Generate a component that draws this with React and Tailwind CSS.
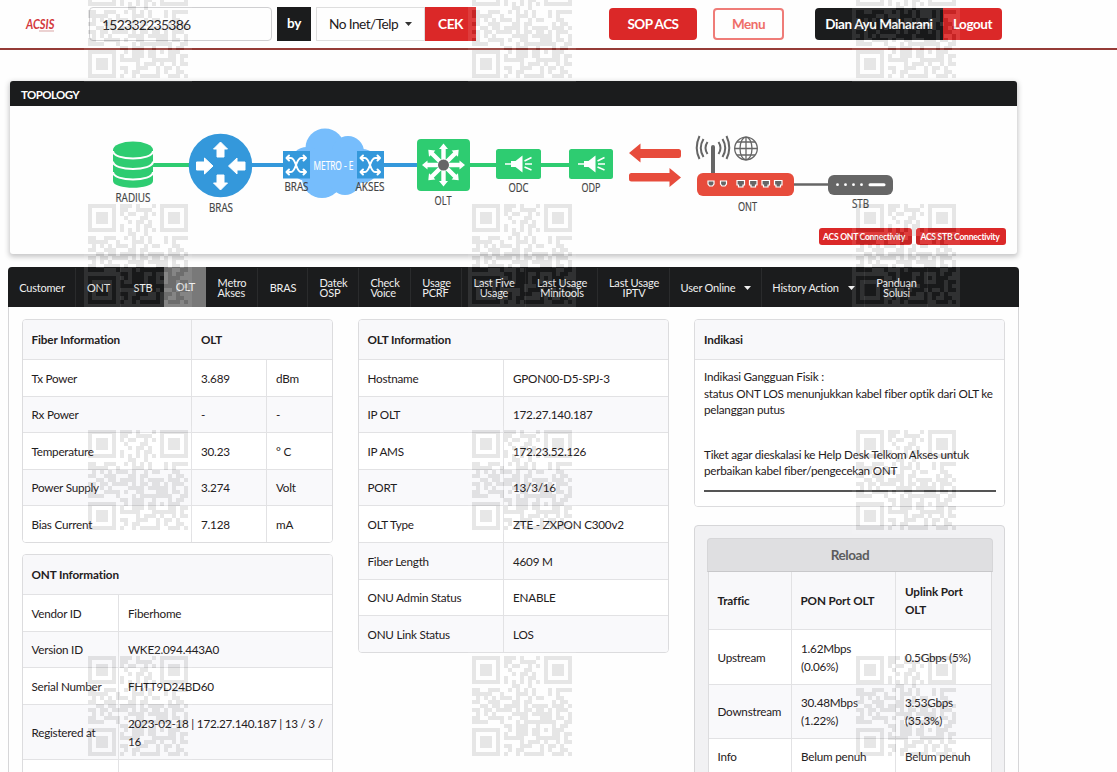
import React from "react";

const QR = [
  "1111111011101000101111111",
  "1000001011001111001000001",
  "1011101010110010101011101",
  "1011101001000110001011101",
  "1011101000101101001011101",
  "1000001010001011001000001",
  "1111111010101010101111111",
  "0000000000110010000000000",
  "1100111001010101000101111",
  "1111100100011101000101000",
  "0101010111010010110001100",
  "1100111000110110000010110",
  "0011011011110101111011101",
  "1101101111010110110101110",
  "0101010000111101111101001",
  "1100111101001100011101101",
  "1111000100010111111110011",
  "0000000011011100100010110",
  "1111111001011101101011100",
  "1000001010011101100011011",
  "1011101011111000111111010",
  "1011101000001011101001011",
  "1011101011001110010110100",
  "1000001001011000010100110",
  "1111111010010111110011101",
];

const qrPath = QR.flatMap((row, y) =>
  [...row].map((c, x) => (c === "1" ? `M${x + 1} ${y + 1}h1v1h-1z` : ""))
).join("");

function Watermark({ className }) {
  return (
    <svg className={`absolute h-[108px] w-[108px] opacity-[0.09] ${className}`} viewBox="0 0 27 27" shapeRendering="crispEdges">
      <rect width="27" height="27" fill="#fff" />
      <path d={qrPath} fill="#000" />
    </svg>
  );
}

function Watermarks() {
  return (
    <div className="pointer-events-none absolute inset-0 overflow-hidden">
      <Watermark className="left-[84px] top-[-26px]" />
      <Watermark className="left-[468px] top-[-26px]" />
      <Watermark className="left-[852px] top-[-26px]" />
      <Watermark className="left-[84px] top-[200px]" />
      <Watermark className="left-[468px] top-[200px]" />
      <Watermark className="left-[852px] top-[200px]" />
      <Watermark className="left-[84px] top-[426px]" />
      <Watermark className="left-[468px] top-[426px]" />
      <Watermark className="left-[852px] top-[426px]" />
      <Watermark className="left-[84px] top-[652px]" />
      <Watermark className="left-[468px] top-[652px]" />
      <Watermark className="left-[852px] top-[652px]" />
    </div>
  );
}

function Caret({ className = "" }) {
  return (
    <svg className={`h-1 w-[7px] shrink-0 ${className}`} viewBox="0 0 7 4">
      <path d="M0 0h7L3.5 4z" fill="currentColor" />
    </svg>
  );
}

function Header() {
  return (
    <header className="flex h-[50px] items-start border-b-2 border-[#953b36] pt-[7px]">
      <svg className="ml-5 mt-[5px] h-[26px] w-[42px] shrink-0" viewBox="0 0 42 26">
        <text x="6" y="17" fontSize="13" fontWeight="700" fontStyle="italic" fill="#d3393c" textLength="28.5" lengthAdjust="spacingAndGlyphs">ACSIS</text>
        <path d="M19 19h15" stroke="#d9a5a5" strokeWidth="1" />
      </svg>
      <div className="ml-[27px] flex h-[34px] w-[183px] items-center rounded-[4px] border border-[#cfcfd1] px-3 text-[14px] tracking-[-0.75px]">152332235386</div>
      <div className="ml-[5px] flex h-[34px] w-[34px] items-center justify-center bg-[#1b1c1d] pb-px text-[13.5px] font-bold tracking-[-0.2px] text-white">by</div>
      <div className="ml-[5px] flex h-[34px] w-[109px] items-center border border-[#dedede] pl-[12px] text-[13.7px] tracking-[-0.55px]">
        <span className="w-[69px] whitespace-nowrap">No Inet/Telp</span>
        <Caret className="ml-[7px] text-[#333]" />
      </div>
      <div className="flex h-[34px] w-[51px] items-center justify-center bg-[#db2828] text-[13.7px] font-bold tracking-[-0.5px] text-white">CEK</div>
      <div className="ml-[133px] mt-px flex h-8 w-[88px] items-center justify-center rounded-[4px] bg-[#db2828] text-[13.5px] font-bold tracking-[-0.5px] text-white">SOP ACS</div>
      <div className="ml-4 mt-px flex h-8 w-[71px] items-center justify-center rounded-[4px] border-2 border-[#ef7c78] text-[13.5px] font-bold tracking-[-0.45px] text-[#ef6d68]">Menu</div>
      <div className="ml-[31px] mt-px flex h-8 w-[128px] items-center justify-center whitespace-nowrap rounded-l-[4px] bg-[#1b1c1d] text-[13.5px] font-bold tracking-[-0.42px] text-white">Dian Ayu Maharani</div>
      <div className="mt-px flex h-8 w-[59px] items-center justify-center rounded-r-[4px] bg-[#db2828] text-[13.5px] font-bold tracking-[-0.42px] text-white">Logout</div>
    </header>
  );
}

function Label({ x, y, w, fill = "#444", children }) {
  return (
    <text x={x} y={y} fontSize="12" fill={fill} stroke={fill} strokeWidth="0.2" textAnchor="middle" textLength={w} lengthAdjust="spacingAndGlyphs" fontFamily="'Open Sans', sans-serif">
      {children}
    </text>
  );
}

const BLOCK_ARROW = "M0 -8.5L8 0L4 0L4 8L-4 8L-4 0L-8 0Z";
const THIN_ARROW = "M0 -8L7 -1L3.500 -1L3.500 7L-3.500 7L-3.500 -1L-7 -1Z";

function Shuffle({ x, y }) {
  return (
    <g transform={`translate(${x} ${y})`}>
      <rect width="27" height="27.5" fill="#3498db" />
      <g fill="none" stroke="#fff" strokeWidth="2" strokeLinecap="round" strokeLinejoin="round">
        <path d="M4.500 7h3.500c5 0 5 14 10 14h4M4.500 21h3.500c5 0 5-14 10-14h4" />
        <path d="M6 4.500L3.500 7L6 9.500M6 18.500L3.500 21L6 23.500M20.500 4.500L23 7L20.500 9.500M20.500 18.500L23 21L20.500 23.500" />
      </g>
    </g>
  );
}

function Splitter({ x, w }) {
  return (
    <g transform={`translate(${x} 149)`}>
      <rect width={w} height="30" rx="2.500" fill="#2ecc71" />
      <path d="M15 12h4.500l7-5.500v17l-7-5.500H15zM9 14.300h6v1.400H9z" fill="#fff" />
      <path d="M28.500 12l7-3.500M29 15h7M28.500 18l7 3" stroke="#fff" strokeWidth="1.500" />
    </g>
  );
}

function Topology() {
  return (
    <svg className="block h-[116px] w-[1007px]" viewBox="10 106 1007 116">
      <path d="M150 165h45" stroke="#2ecc71" strokeWidth="4" />
      <path d="M250 165h40M375 165h45" stroke="#3498db" strokeWidth="4" />
      <path d="M465 165h110" stroke="#2ecc71" strokeWidth="4" />

      <path d="M113 150v31c0 9 40 9 40 0v-31z" fill="#2ecc71" />
      <ellipse cx="133" cy="150" rx="20" ry="8.500" fill="#2ecc71" />
      <path d="M113 151c0 10 40 10 40 0M113 161.500c0 10 40 10 40 0M113 172c0 10 40 10 40 0" fill="none" stroke="#fff" strokeWidth="2" />
      <Label x={133} y={201.500} w={35}>RADIUS</Label>

      <circle cx="220.500" cy="165.500" r="31.800" fill="#3498db" />
      <g fill="#fff" stroke="#fff" strokeWidth="1" strokeLinejoin="round">
        <path d={THIN_ARROW} transform="translate(220.500 150)" />
        <path d={THIN_ARROW} transform="translate(220.500 182) rotate(180)" />
        <path d={BLOCK_ARROW} transform="translate(204.500 166) rotate(90)" />
        <path d={BLOCK_ARROW} transform="translate(237 166) rotate(-90)" />
      </g>
      <Label x={221} y={211.500} w={24}>BRAS</Label>

      <g fill="#76bdfc">
        <circle cx="325" cy="148" r="19.500" />
        <circle cx="348" cy="152" r="16" />
        <circle cx="307" cy="164" r="17" />
        <circle cx="362" cy="166" r="17" />
        <circle cx="322" cy="178" r="20" />
        <circle cx="345" cy="179" r="16" />
        <rect x="303" y="150" width="60" height="36" rx="12" />
      </g>
      <Shuffle x={283} y={151} />
      <Shuffle x={357} y={151} />
      <Label x={333.500} y={170} w={40} fill="#fff">METRO - E</Label>
      <Label x={296.500} y={191} w={24}>BRAS</Label>
      <Label x={370} y={191} w={29}>AKSES</Label>

      <rect x="417" y="139" width="53" height="52" rx="4" fill="#2ecc71" />
      <g transform="translate(443.500 165)" fill="#fff">
        {[0, 45, 90, 135, 180, 225, 270, 315].map((a) => (
          <path key={a} transform={`rotate(${a})`} d="M-2.200 0V-16H-4.500L0 -21.500L4.500 -16H2.200V0Z" />
        ))}
        <circle r="5.500" fill="#666" />
      </g>
      <Label x={443} y={204.500} w={17}>OLT</Label>

      <Splitter x={496} w={45} />
      <Splitter x={569} w={44} />
      <Label x={518.500} y={192} w={20}>ODC</Label>
      <Label x={591} y={192} w={19}>ODP</Label>

      <path d="M629 153L640.500 143.500V149H678.500q2.500 0 2.500 2.500v4q0 2.500-2.500 2.500H640.500V162.500Z" fill="#e74c3c" />
      <path d="M681 177.500L669.500 168V173H631.500q-2.500 0-2.500 2.500v3.500q0 2.500 2.500 2.500H669.500V187Z" fill="#e74c3c" />

      <path d="M713 147v28" stroke="#666" strokeWidth="4" strokeLinecap="round" />
      <g fill="none" stroke="#666" strokeWidth="2">
        <path d="M707.500 142q-4 6 0 12M703.500 139q-5.500 9 0 18M699.500 136q-5.500 12 0 23M718.500 142q4 6 0 12M722.500 139q5.500 9 0 18M726.500 136q5.500 12 0 23" />
      </g>
      <g fill="none" stroke="#666" strokeWidth="1.300">
        <circle cx="746" cy="148.500" r="11.300" />
        <ellipse cx="746" cy="148.500" rx="6" ry="11.300" />
        <path d="M746 137v23M734.500 148.500h23M737 142h18M737 155h18" />
      </g>
      <path d="M790 184.500h42" stroke="#666" strokeWidth="2.500" />
      <rect x="697" y="173" width="97" height="23" rx="6" fill="#e74c3c" />
      <g fill="#666" stroke="#fff" strokeWidth="1.200">
        {[708, 720.500].map((x) => (
          <path key={x} d={`M${x} 181h6v3l-1.500 2h-3l-1.500-2z`} />
        ))}
        {[737, 749.500, 762, 774.500].map((x) => (
          <path key={x} d={`M${x} 180.500h7.500v4.500h-1.500v2h-4.500v-2h-1.500z`} />
        ))}
      </g>
      <Label x={747.500} y={210.500} w={19}>ONT</Label>

      <rect x="828" y="175" width="65" height="20" rx="6" fill="#666" />
      <g fill="#fff">
        <circle cx="837.500" cy="184.700" r="1.400" />
        <circle cx="845.500" cy="184.700" r="1.400" />
        <circle cx="853.500" cy="184.700" r="1.400" />
        <circle cx="861.500" cy="184.700" r="1.400" />
        <rect x="868.500" y="183.200" width="17" height="3" rx="1.500" />
      </g>
      <Label x={860.500} y={207.500} w={17}>STB</Label>
    </svg>
  );
}

function Tab({ w, active, caret, center, last, children }) {
  return (
    <div
      className={`flex h-full shrink-0 items-center justify-center whitespace-pre pl-px text-[11px] leading-[10px] tracking-[-0.2px] text-[#efefef] ${w} ${center ? "text-center" : ""} ${
        active ? "bg-[#797979]" : last ? "" : "border-r border-[#2a2b2c]"
      }`}
    >
      {children}
      {caret && <Caret className="ml-[9px] w-[6px]" />}
    </div>
  );
}

function Tabs() {
  return (
    <nav className="flex h-10 rounded-t-[4px] bg-[#1b1c1d] pt-px">
      <Tab w="w-[68px]">Customer</Tab>
      <Tab w="w-[45px]">ONT</Tab>
      <Tab w="w-[43px]" last>STB</Tab>
      <div className="-mt-px h-10">
        <Tab w="w-[42px]" active>OLT</Tab>
      </div>
      <Tab w="w-[52px]">{"Metro\nAkses"}</Tab>
      <Tab w="w-[50px]">BRAS</Tab>
      <Tab w="w-[51px]">{"Datek\nOSP"}</Tab>
      <Tab w="w-[52px]">{"Check\nVoice"}</Tab>
      <Tab w="w-[51px]">{"Usage\nPCRF"}</Tab>
      <Tab w="w-[64px]" center>{"Last Five\nUsage"}</Tab>
      <Tab w="w-[72px]" center>{"Last Usage\nMinitools"}</Tab>
      <Tab w="w-[72px]" center>{"Last Usage\nIPTV"}</Tab>
      <Tab w="w-[92px]" caret>User Online</Tab>
      <Tab w="w-[103px]" caret>History Action</Tab>
      <Tab w="w-[63px]" center>{"Panduan\nSolusi"}</Tab>
    </nav>
  );
}

const CELL = "border-[#e2e2e4] pr-[8px] text-left align-middle";

function Row({ cells, h, index }) {
  return (
    <tr className={`${h} ${index % 2 ? "bg-[#f9f9fb]" : "bg-white"}`}>
      {cells.map((c, i) => (
        <td key={i} className={`${CELL} border-t pb-[0.5px] ${i ? "border-l pl-[9px]" : "pl-[8.5px]"}`}>{c}</td>
      ))}
    </tr>
  );
}

function Card({ children }) {
  return <div className="overflow-hidden rounded-[4px] border border-[#dcdcde]">{children}</div>;
}

function InfoTable({ cols, head, rows }) {
  return (
    <Card>
      <table className="w-full table-fixed border-separate border-spacing-0">
        <colgroup>{cols.map((c, i) => <col key={i} className={c} />)}</colgroup>
        <thead>
          <tr className="h-[39px] bg-[#f8f8fa]">
            {head.map(([text, span], i) => (
              <th key={i} colSpan={span} className={`${CELL} pb-px font-bold tracking-[-0.12px] ${i ? "border-l pl-[9px]" : "pl-[8.5px]"}`}>{text}</th>
            ))}
          </tr>
        </thead>
        <tbody>
          {rows.map((r, i) => (
            <Row key={i} cells={r} index={i} h={r[0] === "Registered at" ? "h-[55px]" : "h-[36.6px]"} />
          ))}
        </tbody>
      </table>
    </Card>
  );
}

const FIBER = [
  ["Tx Power", "3.689", "dBm"],
  ["Rx Power", "-", "-"],
  ["Temperature", "30.23", "° C"],
  ["Power Supply", "3.274", "Volt"],
  ["Bias Current", "7.128", "mA"],
];
const ONT = [
  ["Vendor ID", "Fiberhome"],
  ["Version ID", "WKE2.094.443A0"],
  ["Serial Number", "FHTT9D24BD60"],
  ["Registered at", "2023-02-18 | 172.27.140.187 | 13 / 3 / 16"],
  ["", ""],
];
const OLT = [
  ["Hostname", "GPON00-D5-SPJ-3"],
  ["IP OLT", "172.27.140.187"],
  ["IP AMS", "172.23.52.126"],
  ["PORT", "13/3/16"],
  ["OLT Type", "ZTE - ZXPON C300v2"],
  ["Fiber Length", "4609 M"],
  ["ONU Admin Status", "ENABLE"],
  ["ONU Link Status", "LOS"],
];
const TRAFFIC = [
  ["Upstream", "1.62Mbps (0.06%)", "0.5Gbps (5%)"],
  ["Downstream", "30.48Mbps (1.22%)", "3.53Gbps (35.3%)"],
  ["Info", "Belum penuh", "Belum penuh"],
];

export default function App() {
  return (
    <div className="relative h-[772px] w-[1117px] overflow-hidden bg-[#fefefe] font-['Lato',sans-serif] text-[#1f2021]">
      <Header />
      <section className="ml-[10px] mt-[31px] h-[173px] w-[1007px] rounded-[3px] bg-[#fefefe] shadow-[0_2px_5px_1px_rgba(34,36,38,0.25)]">
        <h2 className="flex h-[25px] items-center rounded-t-[3px] bg-[#1b1c1d] pl-[11px] pt-[3px] text-[11.5px] font-bold tracking-[-0.6px] text-white">TOPOLOGY</h2>
        <Topology />
        <div className="mr-[11px] mt-[6px] flex justify-end gap-1 text-[8.6px] font-bold tracking-[-0.28px] text-white">
          <span className="flex h-[17px] w-[93px] items-center justify-center whitespace-nowrap rounded-[3px] bg-[#db2828] pr-[3px] pt-px">ACS ONT Connectivity</span>
          <span className="flex h-[17px] w-[90px] items-center justify-center whitespace-nowrap rounded-[3px] bg-[#db2828] pr-[2px] pt-px">ACS STB Connectivity</span>
        </div>
      </section>

      <main className="ml-2 mt-[13px] w-[1011px]">
        <Tabs />
        <div className="flex h-[480px] items-start gap-[25px] border-x border-[#d6d6d8] pl-[13px] pt-3 text-[11.7px] leading-[18px] tracking-[-0.23px]">
          <div className="flex w-[311px] flex-col gap-[11px]">
            <InfoTable cols={["w-[168px]", "w-[75px]", "w-[66px]"]} head={[["Fiber Information", 1], ["OLT", 2]]} rows={FIBER} />
            <InfoTable cols={["w-[95px]", "w-[214px]"]} head={[["ONT Information", 2]]} rows={ONT} />
          </div>
          <div className="w-[311px]">
            <InfoTable cols={["w-[144px]", "w-[165px]"]} head={[["OLT Information", 2]]} rows={OLT} />
          </div>
          <div className="flex w-[311px] flex-col gap-[18px]">
            <Card>
              <h3 className="flex h-10 items-center border-b border-[#e2e2e4] bg-[#f8f8fa] px-[9px] pb-px font-bold tracking-[-0.12px]">Indikasi</h3>
              <div className="h-[146px] bg-white px-[9px] pt-[8px] leading-[16.500px]">
                <p className="whitespace-nowrap">Indikasi Gangguan Fisik :<br />status ONT LOS menunjukkan kabel fiber optik dari OLT ke<br />pelanggan putus</p>
                <p className="mt-[28px] whitespace-nowrap">Tiket agar dieskalasi ke Help Desk Telkom Akses untuk<br />perbaikan kabel fiber/pengecekan ONT</p>
                <div className="mt-[11px] w-[292px] border-t-2 border-[#555]" />
              </div>
            </Card>
            <div className="h-[280px] rounded-[4px] border border-[#d6d6d8] bg-[#f1f1f3] px-3 pt-3">
              <div className="flex h-[34px] w-[286px] items-center justify-center rounded-t-[4px] border border-b-[#c8c8ca] border-[#d6d6d8] bg-[#dfdfe1] text-[13.5px] font-bold tracking-[-0.4px] text-[#5c5c5d]">Reload</div>
              <table className="ml-px w-[284px] table-fixed border-separate border-spacing-0 border-x border-[#dcdcde]">
                <colgroup><col className="w-[82px]" /><col className="w-[104px]" /><col className="w-[96px]" /></colgroup>
                <thead>
                  <tr className="h-[57px] bg-[#f8f8fa] tracking-[-0.12px]">
                    <th className={`${CELL} pb-px pl-[8.5px] font-bold`}>Traffic</th>
                    <th className={`${CELL} border-l pb-px pl-[8.5px] font-bold`}>PON Port OLT</th>
                    <th className={`${CELL} border-l pb-px pl-[9px] font-bold`}>Uplink Port<br />OLT</th>
                  </tr>
                </thead>
                <tbody>
                  {TRAFFIC.map((r, i) => (
                    <Row key={i} cells={r} index={i} h={i < 2 ? "h-[54.5px]" : "h-[36px]"} />
                  ))}
                </tbody>
              </table>
            </div>
          </div>
        </div>
      </main>
      <Watermarks />
    </div>
  );
}
